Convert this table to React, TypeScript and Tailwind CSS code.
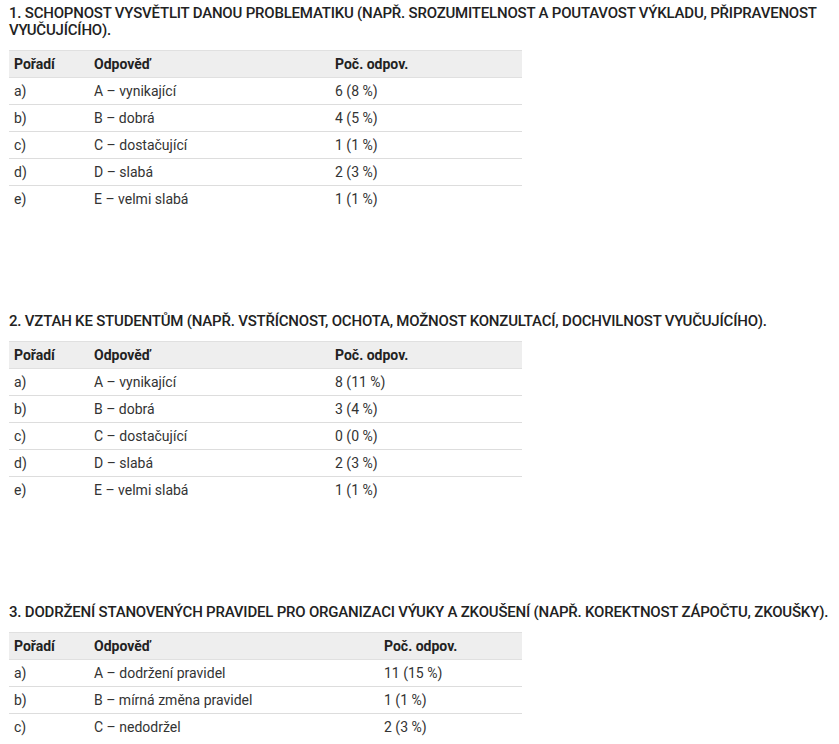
type Row = { order: string; answer: string; count: string };

type Question = {
  title: string;
  countCol: string;
  rows: Row[];
};

const grades: string[] = ["A – vynikající", "B – dobrá", "C – dostačující", "D – slabá", "E – velmi slabá"];

const questions: Question[] = [
  {
    title: "1. SCHOPNOST VYSVĚTLIT DANOU PROBLEMATIKU (NAPŘ. SROZUMITELNOST A POUTAVOST VÝKLADU, PŘIPRAVENOST VYUČUJÍCÍHO).",
    countCol: "w-[241px]",
    rows: ["6 (8 %)", "4 (5 %)", "1 (1 %)", "2 (3 %)", "1 (1 %)"].map((count, i) => ({
      order: "abcde"[i] + ")",
      answer: grades[i],
      count,
    })),
  },
  {
    title: "2. VZTAH KE STUDENTŮM (NAPŘ. VSTŘÍCNOST, OCHOTA, MOŽNOST KONZULTACÍ, DOCHVILNOST VYUČUJÍCÍHO).",
    countCol: "w-[241px]",
    rows: ["8 (11 %)", "3 (4 %)", "0 (0 %)", "2 (3 %)", "1 (1 %)"].map((count, i) => ({
      order: "abcde"[i] + ")",
      answer: grades[i],
      count,
    })),
  },
  {
    title: "3. DODRŽENÍ STANOVENÝCH PRAVIDEL PRO ORGANIZACI VÝUKY A ZKOUŠENÍ (NAPŘ. KOREKTNOST ZÁPOČTU, ZKOUŠKY).",
    countCol: "w-[290px]",
    rows: [
      { order: "a)", answer: "A – dodržení pravidel", count: "11 (15 %)" },
      { order: "b)", answer: "B – mírná změna pravidel", count: "1 (1 %)" },
      { order: "c)", answer: "C – nedodržel", count: "2 (3 %)" },
    ],
  },
];

/** Show one survey question with its answer table. */
function ShowQuestion({ question }: { question: Question }) {
  return (
    <section>
      <h2 className="text-[15px] leading-[17px] font-medium tracking-[-0.2px] text-[#222]">{question.title}</h2>
      <table className="mt-[11px] mb-[100.5px] w-[513px] border-collapse text-[14px] text-[#333]">
        <thead>
          <tr className="h-[27px] border-y border-[#e0e0e0] bg-[#eeeeee] text-left text-[#222]">
            <th className="w-[80px] px-[5px] font-bold">Pořadí</th>
            <th className={`${question.countCol} px-[5px] font-bold`}>Odpověď</th>
            <th className="px-[5px] font-bold">Poč. odpov.</th>
          </tr>
        </thead>
        <tbody>
          {question.rows.map((row) => (
            <tr key={row.order} className="h-[27px] border-b border-[#dddddd] last:border-b-0">
              <td className="px-[5px]">{row.order}</td>
              <td className="px-[5px]">{row.answer}</td>
              <td className="px-[5px]">{row.count}</td>
            </tr>
          ))}
        </tbody>
      </table>
    </section>
  );
}

export default function App() {
  return (
    <div className="min-h-screen bg-white pt-[5px] pl-[9px] font-['Roboto',_'Liberation_Sans',_sans-serif]">
      {questions.map((question) => (
        <ShowQuestion key={question.title} question={question} />
      ))}
    </div>
  );
}
